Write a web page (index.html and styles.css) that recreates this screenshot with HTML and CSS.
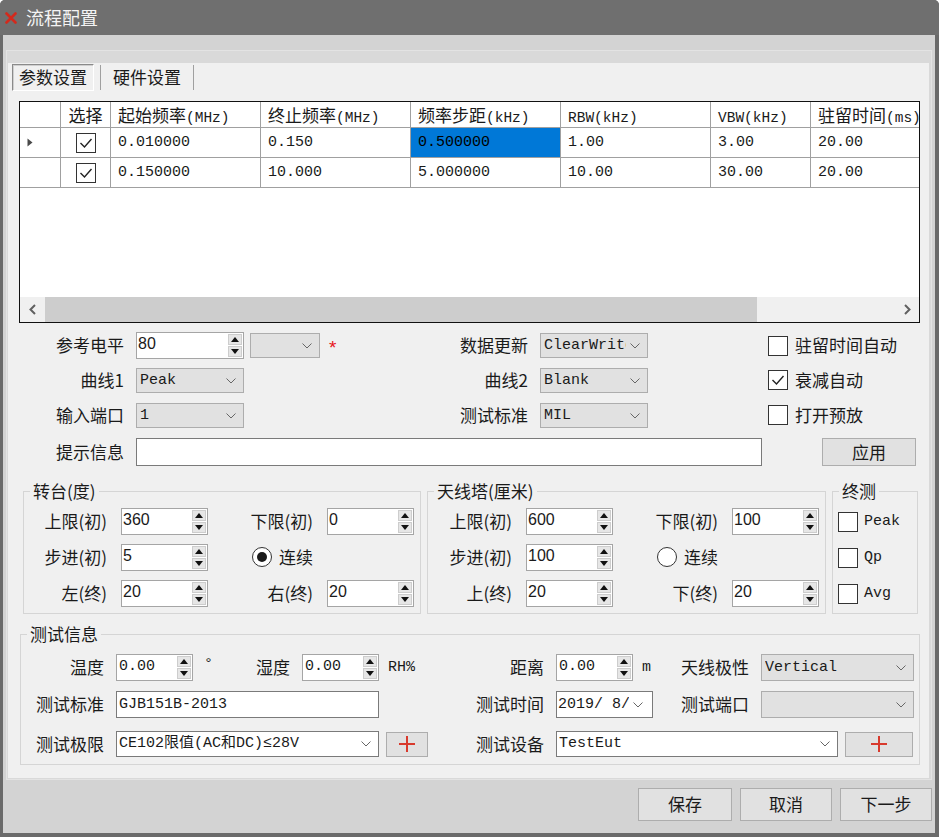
FILE: index.html
```html
<!DOCTYPE html>
<html lang="zh-CN">
<head>
<meta charset="utf-8">
<title>流程配置</title>
<link rel="stylesheet" href="styles.css">
</head>
<body>
<div class="window">
  <header class="titlebar">
    <svg class="app-icon" viewBox="0 0 12 12" aria-hidden="true"><path d="M1.5 1.5 L10.5 10.5 M10.5 1.5 L1.5 10.5"/></svg>
    <span class="title">流程配置</span>
  </header>
  <div class="client">
    <div class="panel">
      <div class="tabctl">
        <div class="tabstrip">
          <div class="tab active">参数设置</div>
          <div class="tab plain">硬件设置</div>
        </div>
        <div class="tabpage">
          <div class="grid">
            <div class="grid-body">
              <table class="dg">
                <colgroup>
                  <col class="c-rh"><col class="c-sel"><col class="c-f"><col class="c-f"><col class="c-f"><col class="c-f"><col class="c-v"><col class="c-f">
                </colgroup>
                <thead>
                  <tr>
                    <th class="rh"></th>
                    <th class="sel">选择</th>
                    <th>起始频率<span class="u">(MHz)</span></th>
                    <th>终止频率<span class="u">(MHz)</span></th>
                    <th>频率步距<span class="u">(kHz)</span></th>
                    <th><span class="u">RBW(kHz)</span></th>
                    <th><span class="u">VBW(kHz)</span></th>
                    <th>驻留时间<span class="u">(ms)</span></th>
                  </tr>
                </thead>
                <tbody>
                  <tr>
                    <td class="rh"><svg class="cur" viewBox="0 0 6 9" aria-hidden="true"><path d="M0.5 0.5 L5.5 4.5 L0.5 8.5 Z"/></svg></td>
                    <td class="sel"><span class="cb on"><svg viewBox="0 0 18 18" aria-hidden="true"><path d="M3.5 9 L7.5 13 L14.5 5"/></svg></span></td>
                    <td>0.010000</td>
                    <td>0.150</td>
                    <td class="hl">0.500000</td>
                    <td>1.00</td>
                    <td>3.00</td>
                    <td>20.00</td>
                  </tr>
                  <tr>
                    <td class="rh"></td>
                    <td class="sel"><span class="cb on"><svg viewBox="0 0 18 18" aria-hidden="true"><path d="M3.5 9 L7.5 13 L14.5 5"/></svg></span></td>
                    <td>0.150000</td>
                    <td>10.000</td>
                    <td>5.000000</td>
                    <td>10.00</td>
                    <td>30.00</td>
                    <td>20.00</td>
                  </tr>
                </tbody>
              </table>
            </div>
            <div class="hscroll">
              <div class="sb-btn"><svg viewBox="0 0 9 11" aria-hidden="true"><path d="M7 1 L2.5 5.5 L7 10"/></svg></div>
              <div class="sb-thumb"></div>
              <div class="sb-track"></div>
              <div class="sb-btn right"><svg viewBox="0 0 9 11" aria-hidden="true"><path d="M2 1 L6.5 5.5 L2 10"/></svg></div>
            </div>
          </div>

          <div class="form">
            <div class="frow r1">
              <div class="seg-l">
                <span class="fl">参考电平</span>
                <div class="spin w108"><span class="sv">80</span><span class="sa"><b class="up"></b><b class="dn"></b></span></div>
                <div class="combo w70 ml6"><span class="cv m"></span><svg class="chev" viewBox="0 0 10 6" aria-hidden="true"><path d="M0.5 0.5 L5 5 L9.5 0.5"/></svg></div>
                <span class="req">*</span>
              </div>
              <div class="seg-m">
                <span class="fl2">数据更新</span>
                <div class="combo w108"><span class="cv m">ClearWrite</span><svg class="chev" viewBox="0 0 10 6" aria-hidden="true"><path d="M0.5 0.5 L5 5 L9.5 0.5"/></svg></div>
              </div>
              <div class="chk"><span class="cb"></span><span class="ct">驻留时间自动</span></div>
            </div>
            <div class="frow r2">
              <div class="seg-l">
                <span class="fl">曲线1</span>
                <div class="combo w108"><span class="cv m">Peak</span><svg class="chev" viewBox="0 0 10 6" aria-hidden="true"><path d="M0.5 0.5 L5 5 L9.5 0.5"/></svg></div>
              </div>
              <div class="seg-m">
                <span class="fl2">曲线2</span>
                <div class="combo w108"><span class="cv m">Blank</span><svg class="chev" viewBox="0 0 10 6" aria-hidden="true"><path d="M0.5 0.5 L5 5 L9.5 0.5"/></svg></div>
              </div>
              <div class="chk"><span class="cb on"><svg viewBox="0 0 18 18" aria-hidden="true"><path d="M3.5 9 L7.5 13 L14.5 5"/></svg></span><span class="ct">衰减自动</span></div>
            </div>
            <div class="frow r3">
              <div class="seg-l">
                <span class="fl">输入端口</span>
                <div class="combo w108"><span class="cv m">1</span><svg class="chev" viewBox="0 0 10 6" aria-hidden="true"><path d="M0.5 0.5 L5 5 L9.5 0.5"/></svg></div>
              </div>
              <div class="seg-m">
                <span class="fl2">测试标准</span>
                <div class="combo w108"><span class="cv m">MIL</span><svg class="chev" viewBox="0 0 10 6" aria-hidden="true"><path d="M0.5 0.5 L5 5 L9.5 0.5"/></svg></div>
              </div>
              <div class="chk"><span class="cb"></span><span class="ct">打开预放</span></div>
            </div>
            <div class="frow r4">
              <span class="fl">提示信息</span>
              <div class="tb w626 h28"></div>
              <div class="btn w94 h28 apply">应用</div>
            </div>
          </div>

          <div class="groups">
            <fieldset class="grp g1">
              <legend>转台(度)</legend>
              <div class="gbody">
                <div class="grow">
                  <span class="gl">上限(初)</span>
                  <div class="spin w87"><span class="sv">360</span><span class="sa"><b class="up"></b><b class="dn"></b></span></div>
                  <span class="gl2">下限(初)</span>
                  <div class="spin w87"><span class="sv">0</span><span class="sa"><b class="up"></b><b class="dn"></b></span></div>
                </div>
                <div class="grow">
                  <span class="gl">步进(初)</span>
                  <div class="spin w87"><span class="sv">5</span><span class="sa"><b class="up"></b><b class="dn"></b></span></div>
                  <div class="radio"><span class="rb on"></span><span class="ct">连续</span></div>
                </div>
                <div class="grow">
                  <span class="gl">左(终)</span>
                  <div class="spin w87"><span class="sv">20</span><span class="sa"><b class="up"></b><b class="dn"></b></span></div>
                  <span class="gl2">右(终)</span>
                  <div class="spin w87"><span class="sv">20</span><span class="sa"><b class="up"></b><b class="dn"></b></span></div>
                </div>
              </div>
            </fieldset>
            <fieldset class="grp g2">
              <legend>天线塔(厘米)</legend>
              <div class="gbody">
                <div class="grow">
                  <span class="gl wide">上限(初)</span>
                  <div class="spin w87"><span class="sv">600</span><span class="sa"><b class="up"></b><b class="dn"></b></span></div>
                  <span class="gl2">下限(初)</span>
                  <div class="spin w87"><span class="sv">100</span><span class="sa"><b class="up"></b><b class="dn"></b></span></div>
                </div>
                <div class="grow">
                  <span class="gl wide">步进(初)</span>
                  <div class="spin w87"><span class="sv">100</span><span class="sa"><b class="up"></b><b class="dn"></b></span></div>
                  <div class="radio"><span class="rb"></span><span class="ct">连续</span></div>
                </div>
                <div class="grow">
                  <span class="gl wide">上(终)</span>
                  <div class="spin w87"><span class="sv">20</span><span class="sa"><b class="up"></b><b class="dn"></b></span></div>
                  <span class="gl2">下(终)</span>
                  <div class="spin w87"><span class="sv">20</span><span class="sa"><b class="up"></b><b class="dn"></b></span></div>
                </div>
              </div>
            </fieldset>
            <fieldset class="grp g3">
              <legend>终测</legend>
              <div class="gbody">
                <div class="grow fin"><span class="cb"></span><span class="ct m">Peak</span></div>
                <div class="grow fin"><span class="cb"></span><span class="ct m">Qp</span></div>
                <div class="grow fin"><span class="cb"></span><span class="ct m">Avg</span></div>
              </div>
            </fieldset>
          </div>

          <fieldset class="grp info">
            <legend>测试信息</legend>
            <div class="ibody">
              <div class="irow i1">
                <div class="half">
                  <span class="il">温度</span>
                  <div class="spin w77"><span class="sv m">0.00</span><span class="sa"><b class="up"></b><b class="dn"></b></span></div>
                  <span class="unit m deg">°</span>
                  <span class="il-s">湿度</span>
                  <div class="spin w77"><span class="sv m">0.00</span><span class="sa"><b class="up"></b><b class="dn"></b></span></div>
                  <span class="unit m">RH%</span>
                </div>
                <span class="il2">距离</span>
                <div class="spin w77"><span class="sv m">0.00</span><span class="sa"><b class="up"></b><b class="dn"></b></span></div>
                <span class="unit m um">m</span>
                <span class="il3">天线极性</span>
                <div class="combo w153 h27"><span class="cv m">Vertical</span><svg class="chev" viewBox="0 0 10 6" aria-hidden="true"><path d="M0.5 0.5 L5 5 L9.5 0.5"/></svg></div>
              </div>
              <div class="irow i2">
                <div class="half">
                  <span class="il">测试标准</span>
                  <div class="tb w263 h27"><span class="cv m">GJB151B-2013</span></div>
                </div>
                <span class="il2">测试时间</span>
                <div class="date w97 h27"><span class="cv m">2019/ 8/ 20</span><svg class="chev" viewBox="0 0 10 6" aria-hidden="true"><path d="M0.5 0.5 L5 5 L9.5 0.5"/></svg></div>
                <span class="il3 ml14">测试端口</span>
                <div class="combo w153 h27"><span class="cv m"></span><svg class="chev" viewBox="0 0 10 6" aria-hidden="true"><path d="M0.5 0.5 L5 5 L9.5 0.5"/></svg></div>
              </div>
              <div class="irow i3">
                <div class="half">
                  <span class="il">测试极限</span>
                  <div class="combo edit w263 h26"><span class="cv m">CE102限值(AC和DC)≤28V</span><svg class="chev" viewBox="0 0 10 6" aria-hidden="true"><path d="M0.5 0.5 L5 5 L9.5 0.5"/></svg></div>
                  <div class="btn w42 h25 ml7"><svg class="plus" viewBox="0 0 18 18" aria-hidden="true"><path d="M9 1 V17 M1 9 H17"/></svg></div>
                </div>
                <span class="il2">测试设备</span>
                <div class="combo edit w282 h26"><span class="cv m">TestEut</span><svg class="chev" viewBox="0 0 10 6" aria-hidden="true"><path d="M0.5 0.5 L5 5 L9.5 0.5"/></svg></div>
                <div class="btn w68 h25 ml7"><svg class="plus" viewBox="0 0 18 18" aria-hidden="true"><path d="M9 1 V17 M1 9 H17"/></svg></div>
              </div>
            </div>
          </fieldset>
        </div>
      </div>
    </div>
    <div class="actions">
      <div class="btn w94 h33">保存</div>
      <div class="btn w92 h33">取消</div>
      <div class="btn w92 h33">下一步</div>
    </div>
  </div>
</div>
</body>
</html>
```

FILE: styles.css
```css
* { box-sizing: border-box; }
html, body { margin: 0; padding: 0; background: #ffffff; }
body {
  font-family: "Noto Sans CJK SC", "Liberation Sans", sans-serif;
  font-size: 17px;
  color: #1a1a1a;
  line-height: 1.2;
}
.m { font-family: "Liberation Mono", "Noto Sans CJK SC", monospace; font-size: 15px; }

.window {
  width: 939px; height: 837px;
  display: flex; flex-direction: column;
  background: #6a6a6a;
  border-radius: 5px 5px 0 0;
  overflow: hidden;
}
.titlebar {
  height: 35px; flex: none;
  display: flex; align-items: center;
  padding-left: 5px;
  background: #6f6f6f;
}
.app-icon { width: 12px; height: 12px; margin-right: 9px; margin-top: 1px; }
.app-icon path { stroke: #d3291c; stroke-width: 2.6; stroke-linecap: round; fill: none; }
.title { color: #f4f4f4; font-size: 18px; }

.client {
  flex: 1;
  margin: 0 4px 4px 3px;
  background: #d3d3d3;
  padding: 15px 3px 0 3px;
  display: flex; flex-direction: column;
}
.panel {
  height: 730px; flex: none;
  border: 1px solid #e3e3e3;
  background: #d9d9d9;
  padding: 12px 2px 1px 1px;
  display: flex;
}
.tabctl { flex: 1; background: #f0f0f0; display: flex; flex-direction: column; }
.tabstrip { height: 29px; flex: none; display: flex; align-items: flex-start; padding: 1px 0 0 4px; }
.tab { display: flex; align-items: center; justify-content: center; color: #1a1a1a; }
.tab.active {
  width: 82px; height: 27px;
  border: 1px solid; border-color: #8a8a8a #ffffff #ffffff #8a8a8a;
  box-shadow: inset 1px 1px 0 #cfcfcf;
}
.tab.plain {
  width: 94px; height: 25px; margin: 1px 0 0 6px;
  border-left: 1px solid #a0a0a0; border-right: 1px solid #a0a0a0;
}
.tabpage { flex: 1; padding: 9px 9px 0 11px; }

/* data grid */
.grid {
  width: 901px; height: 222px;
  border: 1px solid #111;
  background: #fff;
  display: flex; flex-direction: column;
}
.grid-body { flex: 1; overflow: hidden; }
.dg { border-collapse: separate; border-spacing: 0; table-layout: fixed; width: 941px; }
.c-rh { width: 41px; } .c-sel { width: 50px; } .c-f { width: 150px; } .c-v { width: 100px; }
.dg th, .dg td {
  border-right: 1px solid #a0a0a0;
  border-bottom: 1px solid #a0a0a0;
  padding: 0 0 0 7px;
  text-align: left; white-space: nowrap;
  font-weight: normal;
  vertical-align: middle;
}
.dg th { height: 26px; font-size: 17px; line-height: 24px; }
.dg th .u { font-family: "Liberation Mono", monospace; font-size: 14.5px; line-height: 1; }
.dg td { height: 30px; font-family: "Liberation Mono", monospace; font-size: 15px; }
.dg .sel { text-align: center; padding: 0; }
.dg .rh { padding: 0 0 0 7px; }
.dg td.sel .cb { vertical-align: middle; }
.dg td.hl { background: #0078d7; color: #000; }
.cur { width: 6px; height: 9px; display: block; }
.cur path { fill: #4a4a4a; }

.hscroll { height: 25px; flex: none; display: flex; background: #f0f0f0; }
.sb-btn { width: 25px; display: flex; align-items: center; justify-content: center; }
.sb-btn.right { width: 24px; }
.sb-btn svg { width: 9px; height: 11px; }
.sb-btn path { stroke: #606060; stroke-width: 2; fill: none; }
.sb-thumb { width: 712px; background: #cdcdcd; }
.sb-track { flex: 1; }

/* common controls */
.cb {
  width: 20px; height: 20px; flex: none;
  border: 1px solid #333; background: #fff;
  display: inline-flex; align-items: center; justify-content: center;
}
.cb svg { width: 18px; height: 18px; }
.cb path { stroke: #222; stroke-width: 1.4; fill: none; }
.rb {
  width: 20px; height: 20px; flex: none;
  border: 1px solid #333; border-radius: 50%; background: #fff;
  display: inline-flex; align-items: center; justify-content: center;
}
.rb.on::after { content: ""; width: 10px; height: 10px; border-radius: 50%; background: #1a1a1a; }

.spin {
  height: 27px; flex: none;
  display: flex;
  border: 1px solid #a5a5a5; background: #fff;
}
.spin .sv {
  flex: 1; padding: 1px 0 0 1px;
  font-family: "Liberation Sans", sans-serif; font-size: 16px; line-height: 20px;
}
.spin .sv.m { font-family: "Liberation Mono", monospace; font-size: 15px; padding: 2px 0 0 2px; }
.spin .sa { width: 15px; flex: none; display: flex; flex-direction: column; padding: 1px 1px 1px 0; gap: 1px; }
.spin .sa b {
  flex: 1; background: #e6e6e6; border: 1px solid #cdcdcd;
  display: flex; align-items: center; justify-content: center;
}
.spin .sa b::before { content: ""; border-left: 4.5px solid transparent; border-right: 4.5px solid transparent; }
.spin .sa b.up::before { border-bottom: 5px solid #111; }
.spin .sa b.dn::before { border-top: 5px solid #111; }

.combo {
  height: 25px; flex: none;
  display: flex; align-items: center;
  border: 1px solid #adadad; background: #e1e1e1;
  padding: 0 7px 0 3px;
}
.combo.edit { background: #fff; border-color: #7a7a7a; padding-left: 2px; }
.cv { flex: 1; overflow: hidden; white-space: nowrap; }
.chev { width: 10px; height: 6px; flex: none; margin-left: 4px; }
.chev path { stroke: #666; stroke-width: 1; fill: none; }
.tb { flex: none; border: 1px solid #7a7a7a; background: #fff; display: flex; align-items: center; padding-left: 2px; }
.date {
  flex: none; display: flex; align-items: center;
  border: 1px solid #7a7a7a; background: #fff;
  padding: 0 9px 0 1px;
}
.btn {
  flex: none;
  display: flex; align-items: center; justify-content: center;
  border: 1px solid #adadad; background: #e1e1e1;
  color: #1a1a1a;
}
.plus { width: 18px; height: 18px; }
.plus path { stroke: #d83a2d; stroke-width: 2; fill: none; }

.w42 { width: 42px; } .w68 { width: 68px; } .w70 { width: 70px; } .w77 { width: 77px; }
.w87 { width: 87px; } .w92 { width: 92px; } .w94 { width: 94px; } .w97 { width: 97px; }
.w108 { width: 108px; } .w153 { width: 153px; } .w263 { width: 263px; } .w282 { width: 282px; }
.w626 { width: 626px; }
.h25 { height: 25px; } .h26 { height: 26px; } .h27 { height: 27px; } .h28 { height: 28px; } .h33 { height: 33px; }
.ml6 { margin-left: 6px; } .ml7 { margin-left: 7px; } .ml14 { margin-left: 14px; }

/* upper form */
.form { margin-top: 9px; display: flex; flex-direction: column; gap: 10px; }
.frow { display: flex; align-items: center; }
.frow.r1 { height: 26px; align-items: flex-start; }
.frow.r1 .seg-l, .frow.r1 .seg-m, .frow.r1 .chk { height: 27px; }
.frow.r2, .frow.r3 { height: 25px; }
.frow.r4 { height: 28px; }
.seg-l { width: 405px; flex: none; display: flex; align-items: center; }
.seg-m { width: 344px; flex: none; display: flex; align-items: center; }
.fl { width: 105px; margin-right: 12px; text-align: right; flex: none; }
.fl2 { width: 104px; margin-right: 12px; text-align: right; flex: none; }
.req { color: #e8141b; font-family: "Liberation Sans", sans-serif; font-size: 19px; margin-left: 9px; padding-top: 6px; }
.chk { display: flex; align-items: center; }
.chk .ct { margin-left: 7px; }
.apply { margin-left: 60px; }

/* group boxes */
.groups { display: flex; gap: 6px; margin: 15px 0 0 4px; }
fieldset.grp { margin: 0; padding: 0; border: 1px solid #d5d5d5; min-width: 0; }
fieldset.grp legend { padding: 0 3px; margin-left: 6px; line-height: 20px; height: 20px; }
.g1 { width: 398px; } .g2 { width: 399px; } .g3 { width: 86px; }
.gbody { padding: 7px 0 6px 0; display: flex; flex-direction: column; gap: 9px; }
.grow { height: 27px; display: flex; align-items: center; }
.gl { width: 83px; margin-right: 14px; text-align: right; flex: none; }
.gl.wide { width: 84px; }
.gl2 { width: 105px; margin-right: 14px; text-align: right; flex: none; }
.radio { display: flex; align-items: center; margin-left: 44px; }
.radio .ct { margin-left: 7px; }
.grow.fin { padding-left: 5px; }
.grow.fin .ct { margin-left: 6px; }

/* test info */
fieldset.info { width: 900px; margin: 10px 0 0 1px; }
.ibody { padding: 10px 0 7px 0; display: flex; flex-direction: column; }
.irow { display: flex; align-items: center; }
.irow.i1 { height: 27px; }
.irow.i2 { height: 27px; margin-top: 10px; }
.irow.i3 { height: 26px; margin-top: 13px; }
.half { width: 409px; flex: none; display: flex; align-items: center; }
.il { width: 83px; margin-right: 12px; text-align: right; flex: none; }
.il-s { width: 34px; margin-right: 12px; text-align: right; flex: none; }
.il2 { width: 114px; margin-right: 12px; text-align: right; flex: none; }
.il3 { width: 82px; margin-right: 12px; text-align: right; flex: none; }
.unit { flex: none; padding-left: 9px; }
.unit.deg { width: 63px; padding-left: 11px; align-self: flex-start; padding-top: 2px; }
.unit.um { width: 34px; }

/* bottom actions */
.actions { display: flex; justify-content: flex-end; gap: 8px; margin-top: 8px; }
```
